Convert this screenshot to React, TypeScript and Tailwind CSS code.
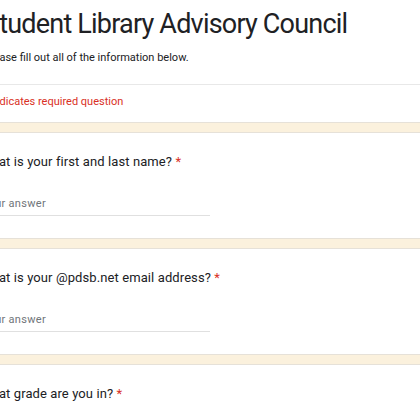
import React from "react";

const questions = [
  "What is your first and last name?",
  "What is your @pdsb.net email address?",
  "What grade are you in?",
];

function Question({ text, last }: { text: string; last?: boolean }) {
  return (
    <div className="bg-white border-y border-[#e6e1d8] h-[107px] pt-[19px]">
      <div className="ml-[-20px] text-[13px] text-[#202124] tracking-[0.1px]" style={{ fontFamily: "Roboto, sans-serif" }}>
        {text} <span className="text-[#d93025]">*</span>
      </div>
      {!last && (
        <div className="ml-[-18px] mt-[24px] w-[228px] border-b border-[#e0e0e0] pb-[3px] text-[11px] text-[#70757a] tracking-[0.3px]" style={{ fontFamily: "Roboto, sans-serif" }}>
          Your answer
        </div>
      )}
    </div>
  );
}

export default function App() {
  return (
    <div className="w-[420px] h-[420px] overflow-hidden bg-[#fbf1dd]">
      <div className="bg-white border-b border-[#e6e1d8] h-[123px]">
        <div className="pt-[6px] ml-[-16px] text-[27px] leading-[36px] tracking-[-0.8px] text-[#202124] whitespace-nowrap" style={{ fontFamily: "Roboto, sans-serif" }}>
          Student Library Advisory Council
        </div>
        <div className="ml-[-16px] mt-[8px] text-[11px] text-[#202124]" style={{ fontFamily: "Roboto, sans-serif" }}>
          Please fill out all of the information below.
        </div>
        <div className="mt-[17px] border-t border-[#e8e8e8] pt-[9px] ml-[-17px] text-[11px] text-[#d93025]" style={{ fontFamily: "Roboto, sans-serif" }}>
          * Indicates required question
        </div>
      </div>
      <div className="flex flex-col gap-[9px] mt-[9px]">
        {questions.map((q, i) => (
          <Question key={q} text={q} last={i === questions.length - 1} />
        ))}
      </div>
    </div>
  );
}
